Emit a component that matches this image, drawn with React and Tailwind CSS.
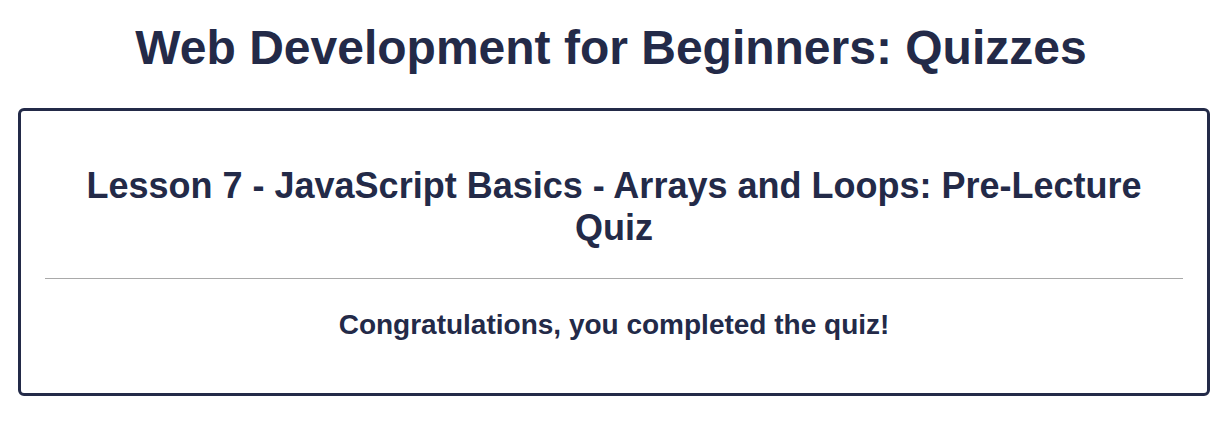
export default function App() {
  return (
    <div className="min-h-screen bg-white text-[#232a48] font-['Liberation_Sans',Arial,sans-serif]">
      <h1 className="pt-[20px] text-center text-[48px] font-bold leading-[56px]">
        Web Development for Beginners: Quizzes
      </h1>
      <div className="mt-[32px] ml-[18px] mr-[12px] h-[288px] rounded-[6px] border-[3px] border-[#232a48] px-[24px]">
        <h2 className="mt-[54px] text-center text-[36px] font-bold leading-[42px]">
          Lesson 7 - JavaScript Basics - Arrays and Loops: Pre-Lecture Quiz
        </h2>
        <hr className="mt-[29px] border-t border-[#a9a9a9]" />
        <p className="mt-[30px] text-center text-[28px] font-bold leading-[32px]">
          Congratulations, you completed the quiz!
        </p>
      </div>
    </div>
  );
}
